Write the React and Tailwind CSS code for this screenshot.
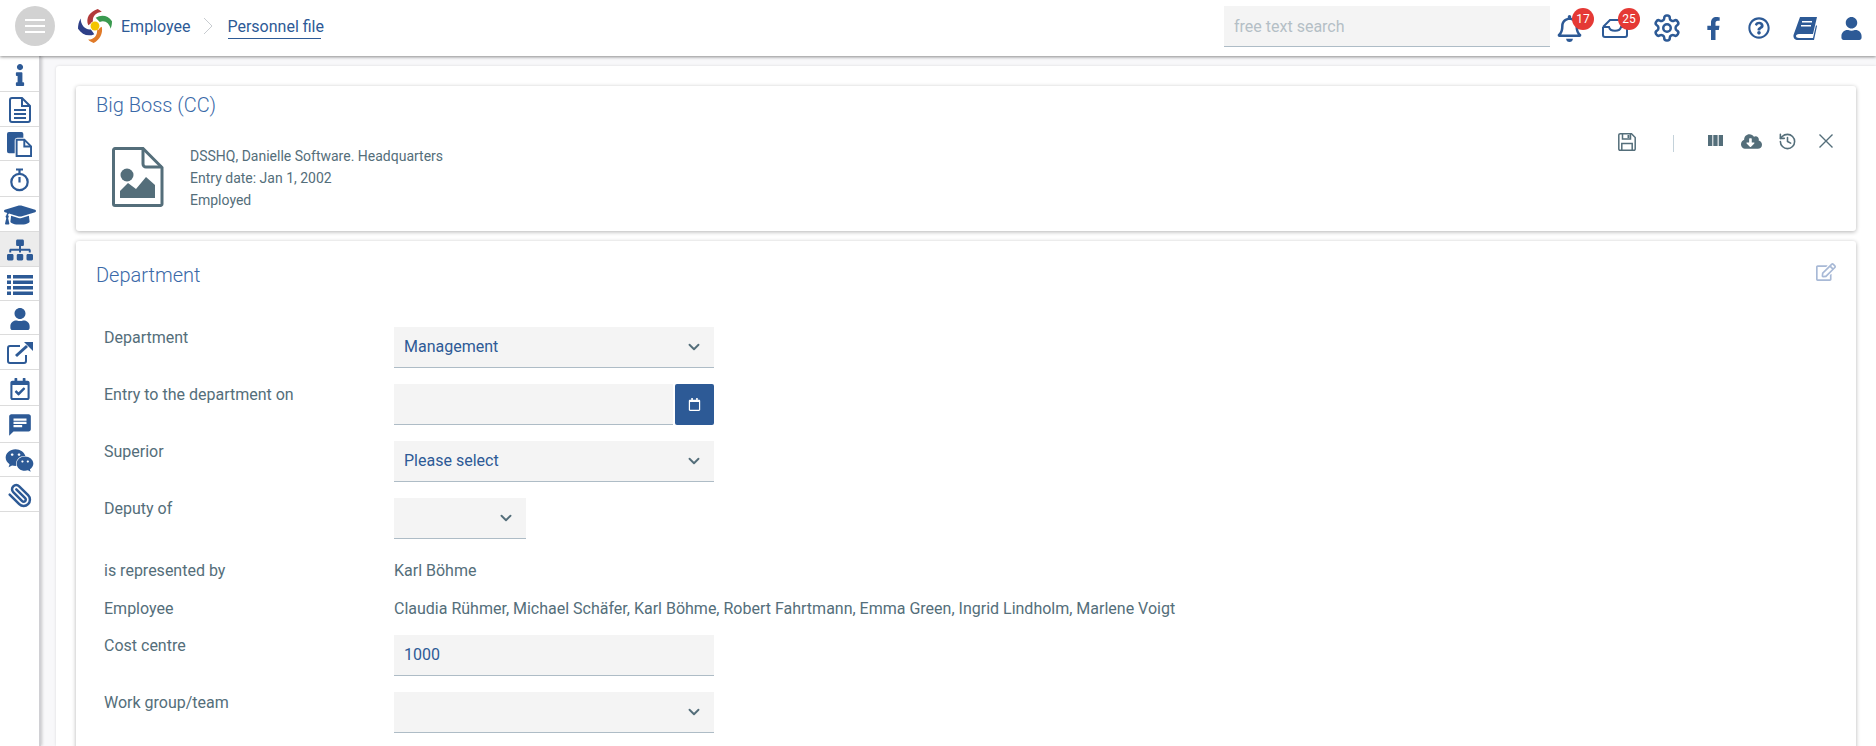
import { FaInfo, FaGraduationCap, FaSitemap, FaUser, FaRegCalendarCheck, FaWeixin, FaRegBell, FaFacebookF, FaRegQuestionCircle, FaCloudDownloadAlt, FaRegEdit, FaRegCalendar } from 'react-icons/fa';
import { MdChat } from 'react-icons/md';
import { LuSettings, LuHistory, LuChevronDown, LuPaperclip } from 'react-icons/lu';

const blue = '#2d5a96';

function FileIcon() {
  return (
    <svg viewBox="0 0 22 26" className="w-[22px] h-[26px]" fill="none" stroke={blue} strokeWidth="2">
      <path d="M3 1h10l8 8v14a2 2 0 0 1-2 2H3a2 2 0 0 1-2-2V3a2 2 0 0 1 2-2z" />
      <path d="M13 1v8h8" />
      <path d="M5 13h12M5 17h12M5 21h12" />
    </svg>
  );
}

function CopyIcon() {
  return (
    <svg viewBox="0 0 26 26" className="w-[25px] h-[25px]" fill={blue}>
      <path d="M2 0h13a2 2 0 0 1 2 2v4h-6a3 3 0 0 0-3 3v13H2a2 2 0 0 1-2-2V2a2 2 0 0 1 2-2z" />
      <path d="M10 8h8l7 7v10H10z" fill="#fff" stroke={blue} strokeWidth="2" />
      <path d="M18 8v7h7" fill="none" stroke={blue} strokeWidth="2" />
    </svg>
  );
}

function StopwatchIcon() {
  return (
    <svg viewBox="0 0 19 24" className="w-[19px] h-[24px]" fill="none" stroke={blue} strokeWidth="2.2">
      <path d="M6 1.5h7M9.5 1.5v4" />
      <circle cx="9.5" cy="14" r="8.2" />
      <path d="M9.5 9v5.5" />
    </svg>
  );
}

function ListIcon() {
  return (
    <svg viewBox="0 0 26 20" className="w-[26px] h-[20px]" fill={blue}>
      <rect x="0" y="0" width="4" height="3.5" />
      <rect x="6" y="0" width="20" height="3.5" />
      <rect x="0" y="5.5" width="4" height="3.5" />
      <rect x="6" y="5.5" width="20" height="3.5" />
      <rect x="0" y="11" width="4" height="3.5" />
      <rect x="6" y="11" width="20" height="3.5" />
      <rect x="0" y="16.5" width="4" height="3.5" />
      <rect x="6" y="16.5" width="20" height="3.5" />
    </svg>
  );
}

function ExternalIcon() {
  return (
    <svg viewBox="0 0 26 22" className="w-[26px] h-[22px]" fill="none" stroke={blue} strokeWidth="2">
      <path d="M13 4H3a2 2 0 0 0-2 2v13a2 2 0 0 0 2 2h14a2 2 0 0 0 2-2v-6" />
      <path d="M9 14L20 4" strokeWidth="3" />
      <path d="M17 0h9v9z" fill={blue} stroke="none" />
    </svg>
  );
}

function InboxIcon() {
  return (
    <svg viewBox="0 0 26 20" className="w-[26px] h-[20px]" fill="none" stroke={blue} strokeWidth="2">
      <path d="M1 9l7-7h12v2M1 9v8a2 2 0 0 0 2 2h20a2 2 0 0 0 2-2V8" />
      <path d="M1 9h6c1 5 11 5 12 0h6" />
    </svg>
  );
}

function BookIcon() {
  return (
    <svg viewBox="0 0 24 23" className="w-[24px] h-[23px]" fill={blue}>
      <path d="M7 0h17l-4 17H6c-2 0-3 1-3 2s1 2 3 2h14l3-13 1 1-3 14H5c-3 0-5-2-4.500-5z" />
      <path d="M9 4h10v1.500H9zM8 8h10v1.500H8z" fill="#fff" />
    </svg>
  );
}

function SaveIcon() {
  return (
    <svg viewBox="0 0 18 18" className="w-[18px] h-[18px]" fill="none" stroke="#546e7a" strokeWidth="1.500">
      <path d="M1.500 0.800h12l3.700 3.700v11.500a1.200 1.200 0 0 1-1.200 1.200H2a1.200 1.200 0 0 1-1.200-1.200V2A1.200 1.200 0 0 1 2 0.800z" />
      <path d="M4.500 1v5h8V1" />
      <path d="M9.500 2v3h2V2z" fill="#546e7a" stroke="none" />
      <path d="M3.800 17v-6.500h10.400V17" />
    </svg>
  );
}

function ColumnsIcon() {
  return (
    <svg viewBox="0 0 15 11" className="w-[15px] h-[11px]" fill="#546e7a">
      <rect x="0" y="0" width="4.300" height="11" />
      <rect x="5.300" y="0" width="4.300" height="11" />
      <rect x="10.700" y="0" width="4.300" height="11" />
    </svg>
  );
}

function CloseIcon() {
  return (
    <svg viewBox="0 0 14 14" className="w-[14px] h-[14px]" fill="none" stroke="#546e7a" strokeWidth="1.400">
      <path d="M0.500 0.500l13 13M13.500 0.500l-13 13" />
    </svg>
  );
}

function PictureFileIcon() {
  return (
    <svg viewBox="0 0 52 60" className="w-[52px] h-[60px]">
      <path d="M3 1.500h28l19 19V57a1.500 1.500 0 0 1-1.500 1.500H3A1.500 1.500 0 0 1 1.500 57V3A1.500 1.500 0 0 1 3 1.500z" fill="none" stroke="#546e7a" strokeWidth="3" />
      <path d="M31 1.500V17a3 3 0 0 0 3 3h16" fill="none" stroke="#546e7a" strokeWidth="3" />
      <circle cx="15" cy="28" r="6.500" fill="#546e7a" />
      <path d="M8 51V44l8-8 8 6 10-12 9 8v13z" fill="#546e7a" />
    </svg>
  );
}

function Logo() {
  return (
    <svg viewBox="0 0 100 100" className="w-[34px] h-[34px]">
      <path d="M30 48C22 26 34 8 58 0c4 2 8 5 12 8-16 2-28 12-26 30z" fill="#b23a3a" />
      <path d="M52 26C68 16 88 18 100 36c0 8-1 14-4 22-4-16-16-26-32-20z" fill="#3a9a50" />
      <path d="M70 52c4 20-6 38-24 48-6-2-12-5-16-10 16 0 28-12 26-30z" fill="#e07a28" />
      <path d="M48 74C30 82 12 76 0 58c0-10 2-20 8-30 0 18 12 34 30 32z" fill="#2e3f88" />
      <circle cx="50" cy="50" r="15" fill="#fff" />
      <circle cx="50" cy="50" r="13" fill="#f4c400" />
    </svg>
  );
}

const sideItems = [
  { icon: <FaInfo size={22} />, h: 'h-[36px]' },
  { icon: <FileIcon />, h: 'h-[35px]' },
  { icon: <CopyIcon />, h: 'h-[34px]' },
  { icon: <StopwatchIcon />, h: 'h-[36px]' },
  { icon: <FaGraduationCap size={32} />, h: 'h-[35px]' },
  { icon: <FaSitemap size={26} />, h: 'h-[35px]', active: true },
  { icon: <ListIcon />, h: 'h-[34px]' },
  { icon: <FaUser size={22} />, h: 'h-[34px]' },
  { icon: <ExternalIcon />, h: 'h-[35px]' },
  { icon: <FaRegCalendarCheck size={22} />, h: 'h-[36px]' },
  { icon: <MdChat size={26} />, h: 'h-[37px]' },
  { icon: <FaWeixin size={29} />, h: 'h-[34px]' },
  { icon: <LuPaperclip size={25} strokeWidth={2.400} className="-scale-x-100" />, h: 'h-[35px]' },
];

function Select({ value, width = 'w-[320px]' }) {
  return (
    <div className={`${width} h-[41px] bg-[#f4f4f4] border-b border-[#aebcc6] flex items-center justify-between pl-[10px] pr-[11px]`}>
      <span className="text-[16px] text-[#2d5a96]">{value}</span>
      <LuChevronDown size={18} strokeWidth={2.500} className="text-[#546e7a]" />
    </div>
  );
}

function Row({ label, children, className = 'h-[57px]' }) {
  return (
    <div className={`flex ${className}`}>
      <div className="w-[298px] pl-[8px] pt-[1px] text-[16px] leading-[20px] text-[#546e7a]">{label}</div>
      <div>{children}</div>
    </div>
  );
}

function TextRow({ label, value }) {
  return (
    <div className="flex items-center h-[38px] text-[16px] text-[#546e7a]">
      <div className="w-[298px] pl-[8px]">{label}</div>
      <div>{value}</div>
    </div>
  );
}

export default function App() {
  return (
    <div className="h-screen overflow-hidden bg-[#f8f8fa] flex flex-col font-['Roboto',sans-serif]">
      <header className="relative z-10 h-[56px] shrink-0 bg-white shadow-[0_1px_3px_rgba(0,0,0,0.45)] flex items-center pl-[15px] pr-[2px] pb-[4px]">
        <div className="w-[40px] h-[40px] rounded-full bg-[#d2d2d2] flex flex-col items-center justify-center gap-[4px]">
          <span className="w-[20px] h-[2px] bg-white" />
          <span className="w-[20px] h-[2px] bg-white" />
          <span className="w-[20px] h-[2px] bg-white" />
        </div>
        <div className="ml-[23px]"><Logo /></div>
        <span className="ml-[9px] mt-[2px] text-[16px] text-[#2d5a96]">Employee</span>
        <svg viewBox="0 0 10 18" className="ml-[13px] w-[10px] h-[18px]" fill="none" stroke="#c8ccd0" strokeWidth="1">
          <path d="M1 1l8 8-8 8" />
        </svg>
        <span className="relative ml-[14px] mt-[2px] text-[16px] text-[#2d5a96]">
          Personnel file
          <span className="absolute left-[1px] right-[3px] bottom-[0px] h-[1px] bg-[#2d5a96]" />
        </span>
        <div className="ml-auto w-[326px] h-[41px] bg-[#f4f4f4] border-b border-[#aebcc6] flex items-center pl-[10px] pt-[2px] text-[16px] text-[#b4bfc6]">free text search</div>
        <div className="mt-[4px] flex items-center text-[#2d5a96]">
          <div className="relative w-[38px] h-[26px] flex items-center justify-center">
            <FaRegBell size={27} />
            <span className="absolute -top-[7px] left-[22px] w-[22px] h-[22px] rounded-full bg-[#e53935] text-white text-[12px] flex items-center justify-center">17</span>
          </div>
          <div className="relative ml-[4px] w-[46px] h-[26px] flex items-center justify-center">
            <InboxIcon />
            <span className="absolute -top-[7px] left-[26px] w-[22px] h-[22px] rounded-full bg-[#e53935] text-white text-[12px] flex items-center justify-center">25</span>
          </div>
          <div className="ml-[6px] w-[46px] flex justify-center"><LuSettings size={30} strokeWidth={2} /></div>
          <div className="w-[46px] flex justify-center"><FaFacebookF size={23} /></div>
          <div className="w-[46px] flex justify-center"><FaRegQuestionCircle size={22} /></div>
          <div className="w-[46px] flex justify-center"><BookIcon /></div>
          <div className="w-[46px] flex justify-center"><FaUser size={23} /></div>
        </div>
      </header>

      <div className="flex flex-1 min-h-0">
        <aside className="w-[41px] shrink-0 bg-white border-r-[2px] border-[#d0d0d4] shadow-[1px_0_3px_rgba(0,0,0,0.2)]">
          {sideItems.map((item, i) => (
            <div key={i} className={`${item.h} pt-[2px] flex items-center justify-center border-b border-[#dcdcdc] text-[#2d5a96] ${item.active ? 'bg-[#ececec]' : ''}`}>
              {item.icon}
            </div>
          ))}
        </aside>

        <main className="flex-1 min-w-0 pl-[15px] pt-[10px]">
          <div className="h-full bg-white rounded-tl-[3px] shadow-[0_0_3px_rgba(0,0,0,0.12)] pl-[20px] pr-[20px] pt-[20px]">
            <section className="h-[145px] bg-white rounded-[3px] shadow-[0_1px_4px_rgba(0,0,0,0.3)] pl-[20px] pr-[23px]">
              <div className="flex justify-between h-full">
                <div>
                  <h2 className="mt-[6px] text-[20px] leading-[26px] text-[#3a69a8] font-light">Big Boss (CC)</h2>
                  <div className="mt-[27px] flex">
                    <div className="ml-[16px] mt-[2px] w-[52px]"><PictureFileIcon /></div>
                    <div className="ml-[26px] text-[14px] leading-[22px] text-[#546e7a]">
                      <p>DSSHQ, Danielle Software. Headquarters</p>
                      <p>Entry date: Jan 1, 2002</p>
                      <p>Employed</p>
                    </div>
                  </div>
                </div>
                <div className="pt-[47px] flex items-start text-[#546e7a]">
                  <SaveIcon />
                  <span className="ml-[37px] mt-[2px] w-[1px] h-[17px] bg-[#c4d2da]" />
                  <span className="ml-[34px] mt-[2px]"><ColumnsIcon /></span>
                  <span className="ml-[18px] -mt-[2px]"><FaCloudDownloadAlt size={21} /></span>
                  <span className="ml-[16px] -mt-[1px]"><LuHistory size={19} strokeWidth={2} /></span>
                  <span className="ml-[22px] mt-[1px]"><CloseIcon /></span>
                </div>
              </div>
            </section>

            <section className="mt-[10px] h-[600px] bg-white rounded-[3px] shadow-[0_1px_4px_rgba(0,0,0,0.3)] pl-[20px] pr-[20px]">
              <div className="flex justify-between pt-[21px]">
                <h2 className="text-[20px] leading-[26px] text-[#3a69a8] font-light">Department</h2>
                <FaRegEdit size={20} className="text-[#a8b9d6]" />
              </div>
              <div className="mt-[39px]">
                <Row label="Department"><Select value="Management" /></Row>
                <Row label="Entry to the department on">
                  <div className="flex">
                    <div className="w-[279px] h-[41px] bg-[#f4f4f4] border-b border-[#aebcc6]" />
                    <div className="ml-[2px] w-[39px] h-[41px] bg-[#2d5a96] rounded-[2px] flex items-center justify-center text-white"><FaRegCalendar size={13} /></div>
                  </div>
                </Row>
                <Row label="Superior"><Select value="Please select" /></Row>
                <Row label="Deputy of" className="h-[54px]"><Select value="" width="w-[132px]" /></Row>
                <TextRow label="is represented by" value="Karl Böhme" />
                <TextRow label="Employee" value="Claudia Rühmer, Michael Schäfer, Karl Böhme, Robert Fahrtmann, Emma Green, Ingrid Lindholm, Marlene Voigt" />
                <div className="mt-[7px]">
                  <Row label="Cost centre">
                    <div className="w-[320px] h-[41px] bg-[#f4f4f4] border-b border-[#aebcc6] flex items-center pl-[10px] text-[16px] text-[#2d5a96]">1000</div>
                  </Row>
                  <Row label="Work group/team"><Select value="" /></Row>
                </div>
              </div>
            </section>
          </div>
        </main>
      </div>
    </div>
  );
}
